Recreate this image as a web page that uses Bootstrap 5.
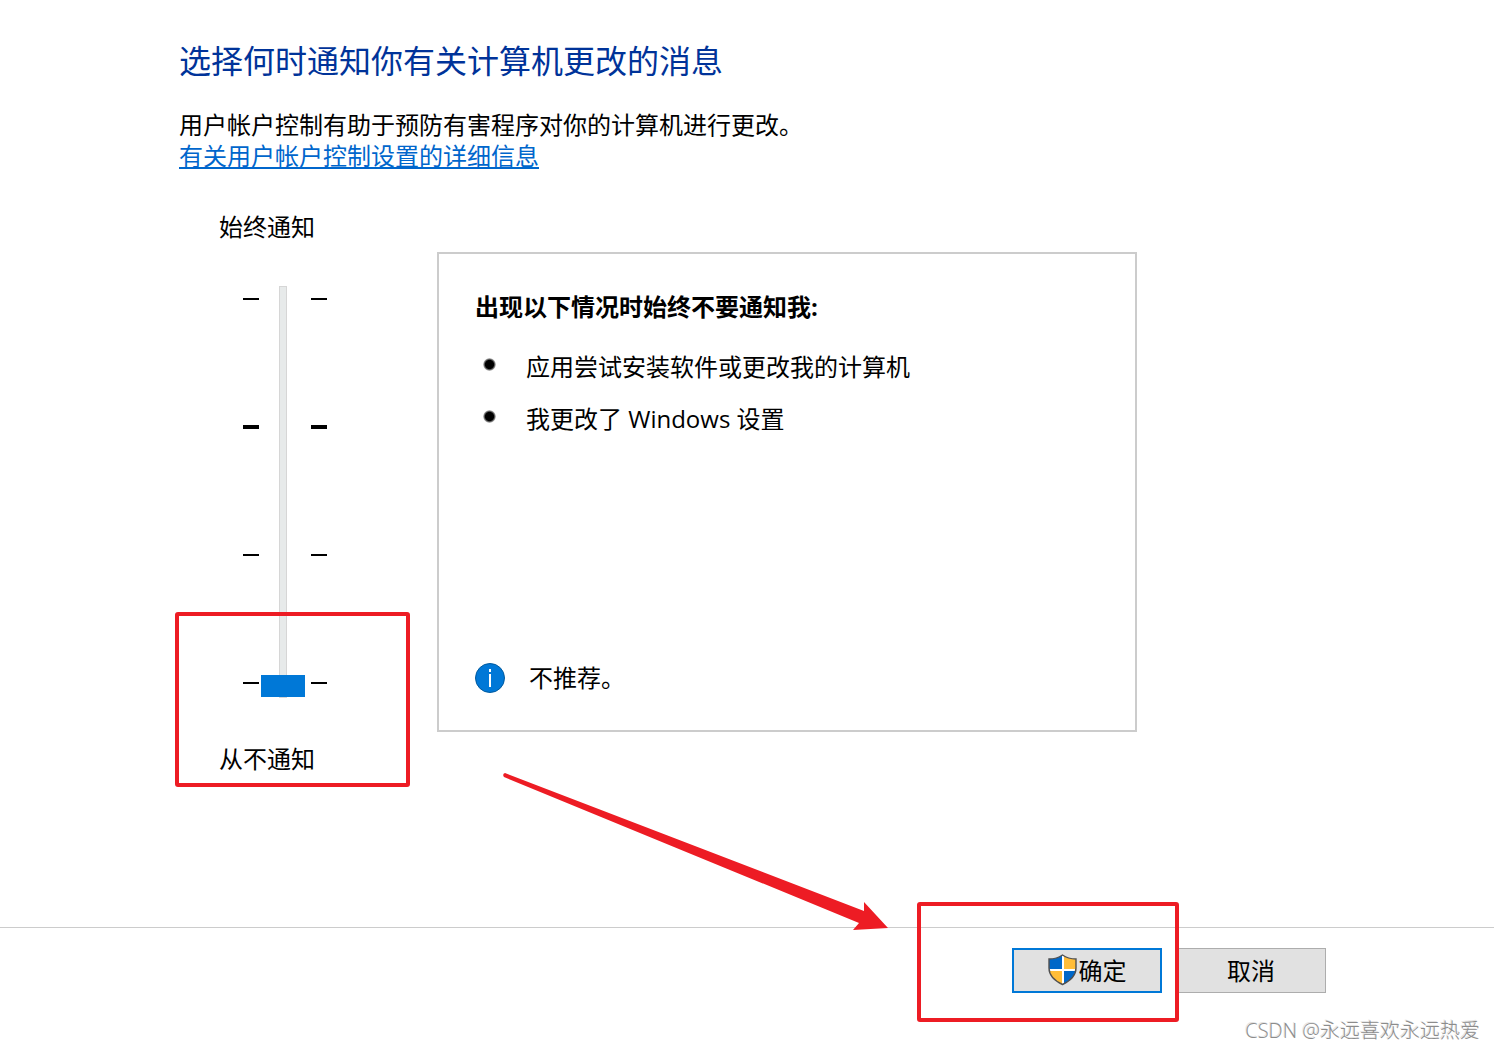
<!DOCTYPE html>
<html lang="zh-CN">
<head>
<meta charset="utf-8">
<meta name="viewport" content="width=device-width, initial-scale=1">
<title>用户帐户控制设置</title>
<link href="https://cdn.jsdelivr.net/npm/bootstrap@5.3.0/dist/css/bootstrap.min.css" rel="stylesheet">
<style>
  body { font-family: "Open Sans", "Noto Sans CJK SC", sans-serif; font-size: 24px; line-height: 31px; font-weight: 400; color: #000; background: #fff; }
  .uac-main { padding: 39px 48px 0 179px; }
  .uac-title { font-size: 32px; line-height: 44px; font-weight: 400; color: #003399; margin-bottom: 26px; }
  .uac-link { color: #0066cc; text-decoration-thickness: 2px; text-underline-offset: 2px; }
  .uac-settings { margin-top: 40px; }
  .level-col { width: 258px; padding-left: 40px; }
  .level-caption { display: block; }
  .level-slider { padding-left: 24px; margin: 44px 0 45px; height: 412px; }
  .tick-col { width: 16px; padding: 12px 0 14px; }
  .tick-mark { height: 2px; background: #000; }
  .tick-strong { height: 4px; margin-top: -1px; }
  .level-input { -webkit-appearance: none; appearance: none; writing-mode: vertical-lr; direction: rtl; width: 44px; height: 412px; margin: 0 6px 0 2px; padding: 0; background: transparent; }
  .level-input::-webkit-slider-runnable-track { -webkit-appearance: none; width: 8px; height: 100%; background: #e7eaea; border: 1px solid #d6d6d6; }
  .level-input::-webkit-slider-thumb { -webkit-appearance: none; width: 44px; height: 22px; margin-left: -19px; background: #0078d7; border: 0; border-radius: 0; }
  .level-mark { left: -4px; right: 27px; top: 401px; bottom: -13px; }
  .red-frame { border: 4px solid #ed1c24; border-radius: 3px; pointer-events: none; }
  .info-panel { flex: 0 1 700px; min-height: 480px; margin-top: 41px; padding: 37px 36px; border: 2px solid #ccc; border-radius: 0; }
  .info-list { margin-top: 29px; gap: 21px; }
  .info-item { gap: 30px; }
  .dot { width: 13px; height: 13px; margin: 0 0 4px 8px; border-radius: 50%; background: radial-gradient(circle, #000 45%, #0000 75%); }
  .advice { gap: 24px; }
  .pointer-arrow { left: 500px; top: 770px; pointer-events: none; }
  .uac-footer { border-top: 1px solid #ccc; padding-top: 20px; }
  .uac-actions { gap: 14px; padding-right: 168px; }
  .uac-btn { width: 150px; height: 45px; padding: 0; font-size: 24px; line-height: 31px; font-weight: 400; color: #000; background: #e1e1e1; border: 1px solid #adadad; border-radius: 0; }
  .uac-btn-main { border: 2px solid #0078d7; gap: 2px; }
  .ok-mark { left: -95px; right: -17px; top: -46px; bottom: -29px; }
  .watermark { font-size: 20px; line-height: 24px; font-weight: 300; color: #8c8c8c; text-shadow: -1px -1px 0 #e4e4e4; padding: 26px 14px 6px 0; }
</style>
</head>
<body class="d-flex flex-column min-vh-100 position-relative">
  <main class="uac-main flex-grow-1">
    <h1 class="uac-title">选择何时通知你有关计算机更改的消息</h1>
    <p class="mb-0">用户帐户控制有助于预防有害程序对你的计算机进行更改。</p>
    <a class="uac-link" href="#">有关用户帐户控制设置的详细信息</a>

    <div class="uac-settings d-flex align-items-start">
      <div class="level-col position-relative flex-shrink-0">
        <label class="level-caption" for="level">始终通知</label>
        <div class="level-slider d-flex">
          <div class="tick-col d-flex flex-column justify-content-between">
            <div class="tick-mark"></div><div class="tick-mark tick-strong"></div><div class="tick-mark"></div><div class="tick-mark"></div>
          </div>
          <input class="level-input" type="range" id="level" min="0" max="3" step="1" value="0">
          <div class="tick-col d-flex flex-column justify-content-between">
            <div class="tick-mark"></div><div class="tick-mark tick-strong"></div><div class="tick-mark"></div><div class="tick-mark"></div>
          </div>
        </div>
        <label class="level-caption" for="level">从不通知</label>
        <div class="level-mark red-frame position-absolute"></div>
      </div>

      <section class="info-panel card">
        <strong>出现以下情况时始终不要通知我:</strong>
        <ul class="info-list list-unstyled d-flex flex-column mb-auto">
          <li class="info-item d-flex align-items-center"><span class="dot flex-shrink-0"></span>应用尝试安装软件或更改我的计算机</li>
          <li class="info-item d-flex align-items-center"><span class="dot flex-shrink-0"></span>我更改了 Windows 设置</li>
        </ul>
        <div class="advice d-flex align-items-center">
          <svg width="30" height="30" viewBox="0 0 30 30" aria-hidden="true">
            <circle cx="15" cy="15" r="14.5" fill="#0078d7" stroke="#005a9e"/>
            <path d="M14 6h2v3h-2zM14 11h2v13h-2z" fill="#fff"/>
          </svg>
          <span>不推荐。</span>
        </div>
      </section>
    </div>
  </main>

  <footer class="uac-footer">
    <div class="uac-actions d-flex justify-content-end">
      <div class="position-relative">
        <button type="button" class="uac-btn uac-btn-main btn d-flex align-items-center justify-content-center">
          <svg width="29" height="34" viewBox="0 0 29 34" aria-hidden="true">
            <clipPath id="shield"><path d="M14.500 1C11 3.500 6 5 1 5v9c0 7 5 12.500 13.500 16.500C23 26.500 28 21 28 14V5C23 5 18 3.500 14.500 1z"/></clipPath>
            <g clip-path="url(#shield)">
              <path fill="#0067c8" d="M0 0h15v16H0zM15 16h15v16H15z"/>
              <path fill="#ffbd39" d="M15 0h15v16H15zM0 16h15v16H0z"/>
              <path fill="#fff" d="M14 0h2v32h-2zM0 15h30v2H0z"/>
            </g>
            <path d="M14.500 1C11 3.500 6 5 1 5v9c0 7 5 12.500 13.500 16.500C23 26.500 28 21 28 14V5C23 5 18 3.500 14.500 1z" fill="none" stroke="#505050" stroke-width="1.4"/>
          </svg>
          <span>确定</span>
        </button>
        <div class="ok-mark red-frame position-absolute"></div>
      </div>
      <button type="button" class="uac-btn btn">取消</button>
    </div>
    <div class="watermark text-end">CSDN @永远喜欢永远热爱</div>
  </footer>

  <svg class="pointer-arrow position-absolute" width="400" height="165" viewBox="0 0 400 165" aria-hidden="true">
    <path fill="#ed1c24" d="M5 3L364 141V132L388 158L353 160L359 153L4 7Q2 4 5 3z"/>
  </svg>
<script src="https://cdn.jsdelivr.net/npm/bootstrap@5.3.0/dist/js/bootstrap.bundle.min.js"></script>
</body>
</html>
